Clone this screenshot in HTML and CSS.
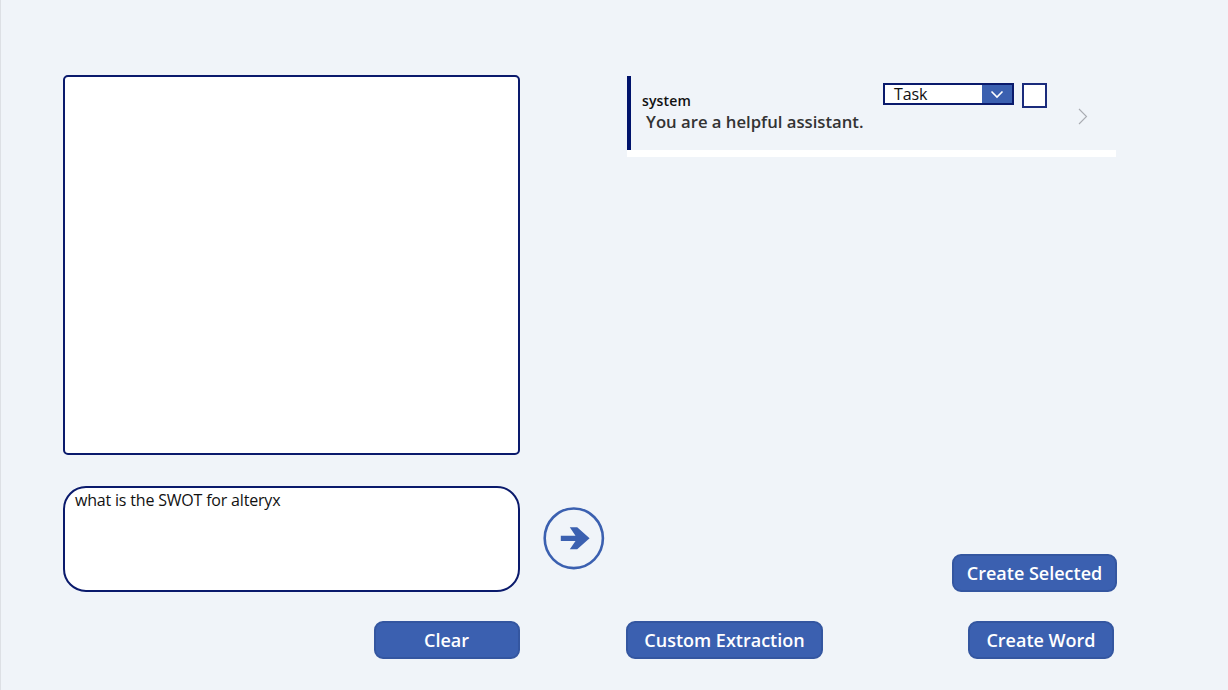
FILE: index.html
```html
<!DOCTYPE html>
<html lang="en">
<head>
<meta charset="utf-8">
<title>Assistant</title>
<link rel="stylesheet" href="styles.css">
</head>
<body>
<main class="page">
  <section class="chat">
    <div class="transcript"></div>
    <div class="prompt"><span class="prompt-text">what is the SWOT for alteryx</span></div>
    <button class="btn btn-clear"><span>Clear</span></button>
  </section>
  <div class="send">
    <svg width="62" height="64" viewBox="0 0 62 64">
      <ellipse cx="30.8" cy="32.3" rx="29.1" ry="29.8" fill="none" stroke="#3b60b0" stroke-width="2.6"/>
      <path d="M17.8 29.7H32.5L26.8 21.3H34.2L46.6 32.3L34.2 43.2H26.8L32.5 34.9H17.8Z" fill="#3b60b0"/>
    </svg>
  </div>
  <section class="results">
    <article class="message">
      <div class="message-text">
        <div class="role">system</div>
        <div class="content">You are a helpful assistant.</div>
      </div>
      <div class="select">
        <span class="select-value">Task</span>
        <span class="select-arrow"><svg width="14" height="9" viewBox="0 0 14 9"><path d="M1.5 1.5L7 7L12.5 1.5" fill="none" stroke="#fff" stroke-width="1.6"/></svg></span>
      </div>
      <div class="checkbox"></div>
      <svg class="next" width="10" height="17" viewBox="0 0 10 17"><path d="M1 1L8.5 8.5L1 16" fill="none" stroke="#a9acb2" stroke-width="1.1"/></svg>
    </article>
    <div class="actions">
      <button class="btn btn-selected"><span>Create Selected</span></button>
      <div class="action-row">
        <button class="btn btn-custom"><span>Custom Extraction</span></button>
        <button class="btn btn-word"><span>Create Word</span></button>
      </div>
    </div>
  </section>
</main>
</body>
</html>
```
FILE: styles.css
```css
* { box-sizing: border-box; }
body {
  margin: 0;
  background: #f0f4f9;
  font-family: "Open Sans", sans-serif;
  color: #111;
}
.page {
  display: flex;
  height: 690px;
  padding: 75px 0 0 62px;
  padding-bottom: 31px;
  border-left: 1px solid #dde0e5;
  overflow: hidden;
}
.chat {
  display: flex;
  flex-direction: column;
  width: 457px;
}
.transcript {
  height: 380px;
  border: 2px solid #0a1a6c;
  border-radius: 5px;
  background: #fff;
}
.prompt {
  height: 106px;
  margin-top: 31px;
  padding: 1px 10px;
  border: 2px solid #0a1a6c;
  border-radius: 23px;
  background: #fff;
  font-size: 16px;
  line-height: 22px;
  letter-spacing: -0.19px;
  white-space: nowrap;
}
.btn {
  display: flex;
  align-items: center;
  justify-content: center;
  height: 38px;
  padding: 0;
  border: 2px solid #3456a0;
  border-radius: 9px;
  background: #3b60b0;
  color: #fff;
  font: 600 18px/24px "Open Sans", sans-serif;
  white-space: nowrap;
}
.btn-clear { width: 146px; margin: 29px 0 0 auto; padding-right: 1px; }
.send { width: 62px; margin: 431px 21px 0 23px; }
.send svg { display: block; }
.results {
  display: flex;
  flex-direction: column;
  justify-content: space-between;
  width: 491px;
}
.message {
  display: flex;
  width: 489px;
  height: 82px;
  margin: 0 0 0 1px;
  border-top: 1px solid #f0f4f9;
  border-bottom: 7px solid #fff;
  background: linear-gradient(#00126b, #00126b) 0 0 / 4px 100% no-repeat;
}
.message-text { width: 256px; padding: 15px 0 0 15px; white-space: nowrap; }
.role { font-weight: 600; font-size: 14px; line-height: 20px; letter-spacing: 0.15px; color: #111; }
.content { padding-left: 4px; font-weight: 600; font-size: 16.7px; line-height: 22px; color: #333; }
.select {
  display: flex;
  width: 131px;
  height: 22px;
  margin-top: 7px;
  border: 2px solid #0a1a6c;
  background: #fff;
}
.select-value { flex: 1; padding-left: 9px; font-size: 16px; line-height: 18px; letter-spacing: -0.1px; }
.select-arrow {
  display: flex;
  align-items: center;
  justify-content: center;
  width: 30px;
  background: #3b60b0;
}
.checkbox {
  width: 25px;
  height: 25px;
  margin: 7px 0 0 8px;
  border: 2px solid #1a2b7c;
  background: #fff;
}
.next { margin: 32px 0 0 31px; }
.actions { display: flex; flex-direction: column; gap: 29px; }
.btn-selected { width: 165px; margin-left: auto; }
.action-row { display: flex; justify-content: space-between; padding-right: 3px; }
.btn-custom { width: 197px; }
.btn-word { width: 146px; }
```
